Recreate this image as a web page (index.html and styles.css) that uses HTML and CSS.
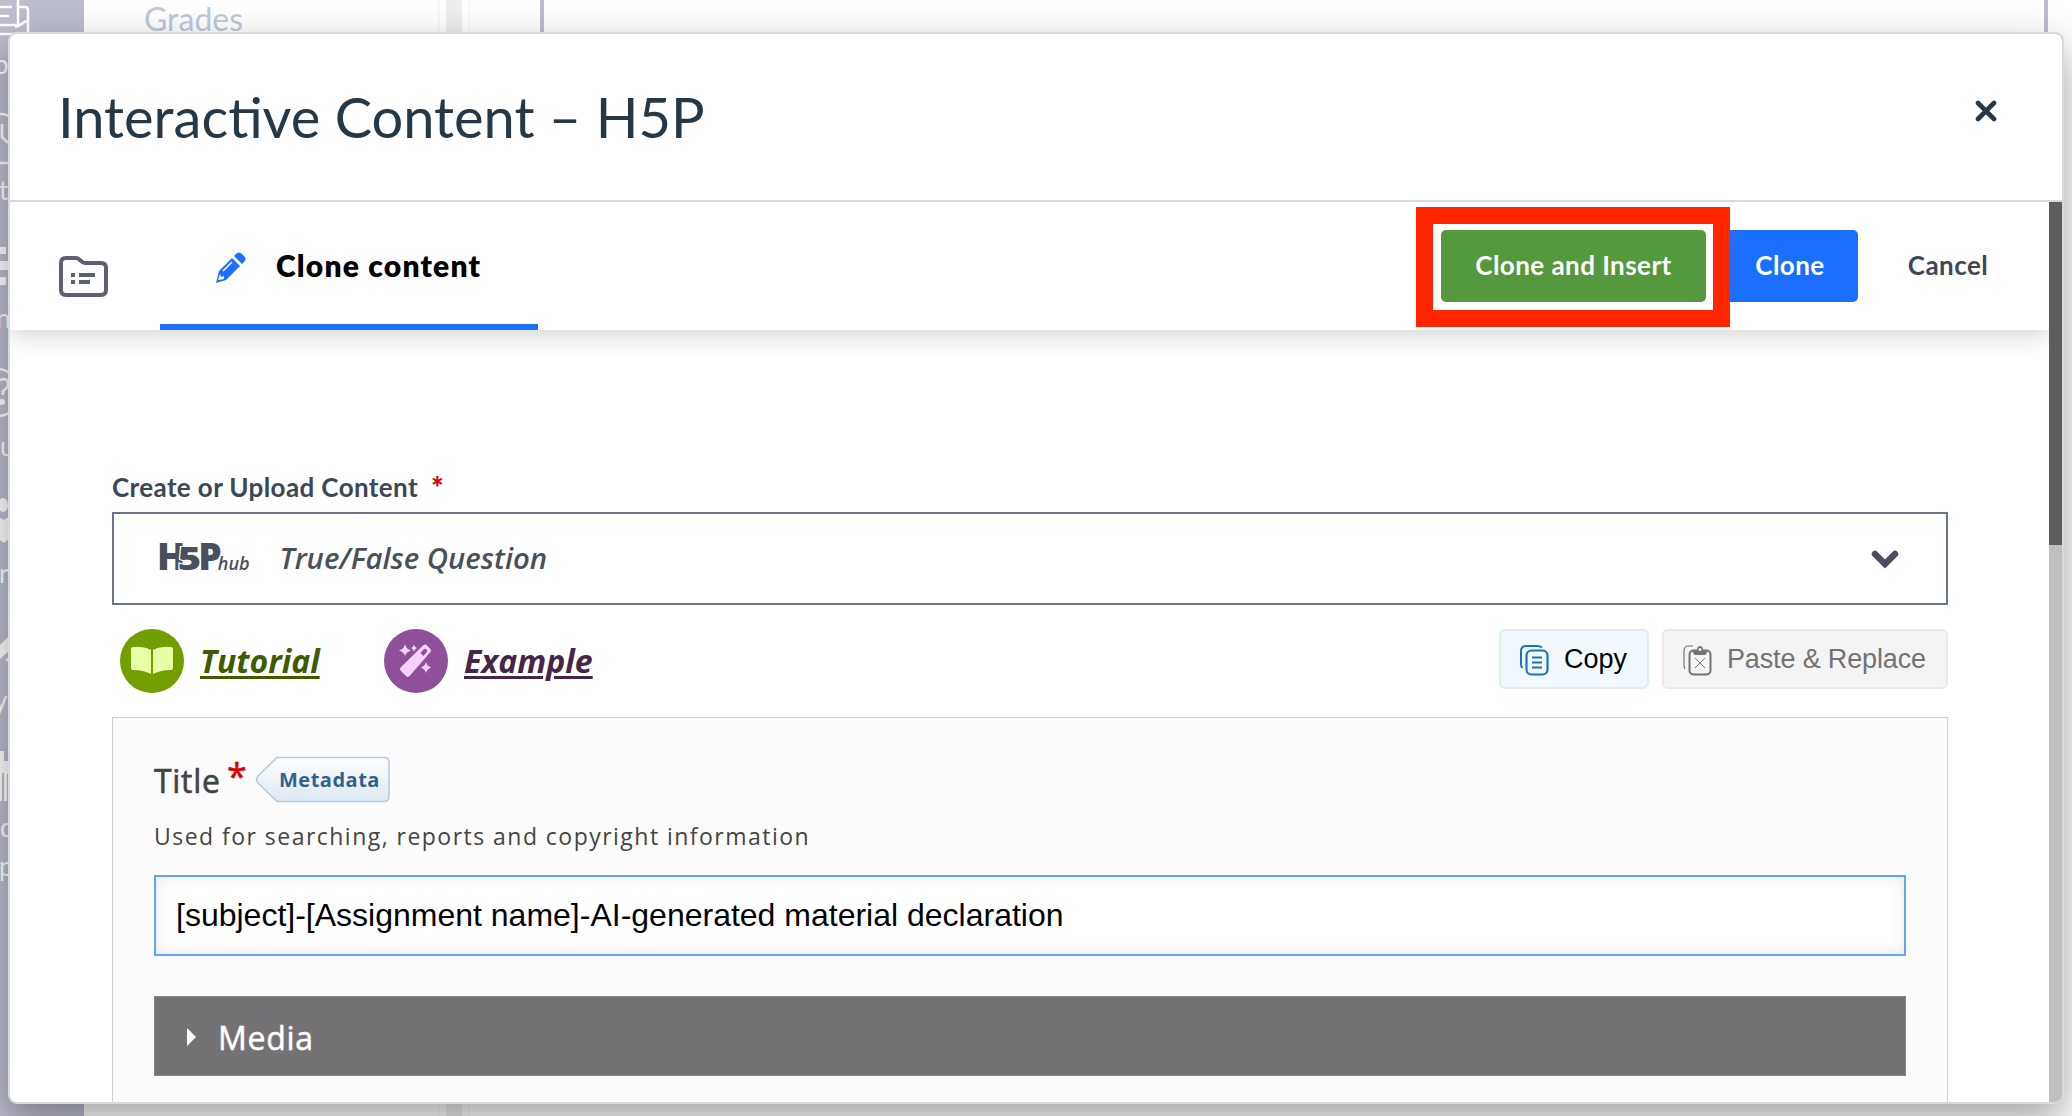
FILE: index.html
```html
<!DOCTYPE html>
<html lang="en">
<head>
  <meta charset="UTF-8" />
  <meta name="viewport" content="width=device-width, initial-scale=1.0"/>
  <title>Interactive Content – H5P</title>
  <link rel="stylesheet" href="styles.css">
</head>
<body>

  <div class="page">
    <nav class="global-nav">
      <svg width="84" height="1116" viewBox="0 0 84 1116">
        <g fill="none" stroke="#fff" stroke-width="2.6">
          <path d="M0 7H12M0 16H9M18 0V25H0M18 7H25Q28 7 28 10V32M0 34H40M15 27C21 27 22 21 28 21"/>
          <path d="M0 114H2Q6 114 10 117M0 163H10M2 124V137L8 143"/>
          <path d="M0 369Q8 370 12 377M0 380Q8 377 8 384Q8 388 3 391V395M0 416Q8 415 12 410"/>
        </g>
        <g fill="#fff">
          <path d="M0 247H6V254H0zM0 261H10V270H0zM0 277H6V285H0z"/>
          <circle cx="2" cy="402" r="3"/>
          <ellipse cx="3" cy="505" rx="5" ry="7"/>
          <path d="M0 518L4 520L10 516V538L4 543L0 540z"/>
          <path d="M0 645L10 635V650L0 659zM5 660L10 656V663z"/>
          <path d="M0 751H4V761H10V774H7V801H4V773H2V801H0z"/>
        </g>
        <g class="nav-text">
          <text x="-6" y="74">p</text>
          <text x="-1" y="200">t</text>
          <text x="-4" y="328">n</text>
          <text x="0" y="456">u</text>
          <text x="-1" y="583">r</text>
          <text x="-6" y="710">y</text>
          <text x="0" y="837">d</text>
          <text x="-1" y="876">p</text>
        </g>
      </svg>
    </nav>
    <aside class="course-menu">Grades</aside>
    <div class="divider"></div>
    <div class="page-main"><div class="editor-frame"></div></div>
  </div>

  <div class="modal">
    <header class="modal-header">
      <h1>Interactive Content – H5P</h1>
      <svg class="close" width="22" height="22" viewBox="0 0 22 22">
        <path d="M3 3L19 19M19 3L3 19" fill="none" stroke="#263845" stroke-width="4.6" stroke-linecap="round"/>
      </svg>
    </header>

    <div class="modal-body">
      <div class="frame">
        <div class="toolbar">
          <svg class="folder" width="50" height="42" viewBox="0 0 50 42">
            <path d="M7 2H17C21 2 22 7 26 7H42Q47 7 47 12V34Q47 39 42 39H7Q2 39 2 34V7Q2 2 7 2Z" fill="none" stroke="#5d606e" stroke-width="4"/>
            <path d="M12 19H16M20 19H36M12 26H16M20 26H31" stroke="#5d606e" stroke-width="4"/>
          </svg>
          <div class="tab">
            <svg width="32" height="32" viewBox="0 0 32 32">
              <path d="M21 2Q24-1 27 2L29 4Q32 7 29 10L27 12L19 4Z" fill="#1a6fff"/>
              <path d="M17 6L25 14L11 28L1 31L4 19Z" fill="#1a6fff"/>
              <path d="M8 19L17 10" stroke="#fff" stroke-width="1.6"/>
              <path d="M5 22L3 28L9 27L9 24L6 25Z" fill="#fff"/>
            </svg>
            <span>Clone content</span>
          </div>
          <div class="actions">
            <div class="insert-wrap">
              <button class="btn btn-insert">Clone and Insert</button>
              <div class="highlight"></div>
            </div>
            <button class="btn btn-clone">Clone</button>
            <button class="btn btn-cancel">Cancel</button>
          </div>
        </div>

        <div class="content">
          <label class="field-label">Create or Upload Content <span class="required">*</span></label>
          <div class="hub">
            <span class="hub-logo">H<span class="five">5</span>P</span><span class="hub-sub">hub</span>
            <span class="hub-title">True/False Question</span>
            <svg class="chevron" width="28" height="20" viewBox="0 0 28 20">
              <path d="M4 5L14 15L24 5" fill="none" stroke="#494f5c" stroke-width="6.5" stroke-linecap="round"/>
            </svg>
          </div>

          <div class="links">
            <svg width="64" height="64" viewBox="0 0 64 64">
              <circle cx="32" cy="32" r="32" fill="#739e00"/>
              <path d="M31 21Q23 17 13 18Q11 18 11 20V39Q11 41 13 41Q23 41 31 45ZM33 21Q41 17 51 18Q53 18 53 20V39Q53 41 51 41Q41 41 33 45Z" fill="#e7ffa6"/>
            </svg>
            <a class="tutorial">Tutorial</a>
            <svg width="64" height="64" viewBox="0 0 64 64">
              <circle cx="32" cy="32" r="32" fill="#8f4f9b"/>
              <path d="M39 16.500Q41 14.500 43 16.500L46 19.500Q48 21.500 46 23.500L26 46.500Q24 49 22 47L17 42Q15 40 17 38Z" fill="#f6d3ff"/>
              <path d="M39 21Q41 19 42.500 20.500T42 24L39.500 27L36.500 24Z" fill="#8f4f9b"/>
              <path d="M21 15Q22 20 27 21.500Q22 23 21 27Q20 23 15 21.500Q20 20 21 15ZM30 15.500Q30.500 18 33 19Q30.500 20 30 22.500Q29.500 20 27 19Q29.500 18 30 15.500ZM42 33Q43 37 47 38.500Q43 40 42 44Q41 40 37 38.500Q41 37 42 33Z" fill="#f6d3ff"/>
            </svg>
            <a class="example">Example</a>

            <button class="clip-btn copy">
              <svg width="32" height="32" viewBox="0 0 32 32" fill="none" stroke="#1a73b8">
                <rect x="7.500" y="6.500" width="21" height="24" rx="5" stroke-width="2.200"/>
                <path d="M3.500 24Q2 23 2 20V7Q2 2 7 2H18Q21 2 23 3.500" stroke-width="2"/>
                <path d="M13 13.500H23M13 18.500H23M13 23.500H23" stroke-width="2"/>
              </svg>
              Copy
            </button>
            <button class="clip-btn paste">
              <svg width="32" height="32" viewBox="0 0 32 32" fill="none" stroke="#737373">
                <rect x="7.500" y="6.500" width="21" height="24" rx="4" stroke-width="2"/>
                <path d="M3 25Q2 23 2 20V7Q2 2 7 2H11" stroke-width="1.200"/>
                <path d="M13 14L23 24M23 14L13 24" stroke-width="1"/>
                <path d="M11 6H15Q15 2 18 2T21 6H25V8Q25 11 22 11H14Q11 11 11 8Z" fill="#737373" stroke="none"/>
                <circle cx="18" cy="5.500" r="1.500" fill="#f4f4f4" stroke="none"/>
              </svg>
              Paste &amp; Replace
            </button>
          </div>

          <div class="form">
            <div class="title-row">
              <span class="title-label">Title</span><span class="star">*</span>
              <div class="metadata">
                <svg width="136" height="47" viewBox="0 0 136 47">
                  <defs>
                    <linearGradient id="tag" x1="0" y1="0" x2="0" y2="1">
                      <stop offset="0" stop-color="#fff"/>
                      <stop offset="1" stop-color="#dce8f0"/>
                    </linearGradient>
                  </defs>
                  <path d="M22 1.500H129Q134 1.500 134 6.500V40.500Q134 45.500 129 45.500H22L3 27Q0 23.500 3 20Z" fill="url(#tag)" stroke="#b5c9dc" stroke-width="1.500"/>
                </svg>
                <span>Metadata</span>
              </div>
            </div>
            <p class="description">Used for searching, reports and copyright information</p>
            <input class="title-input" type="text" value="[subject]-[Assignment name]-AI-generated material declaration">
            <div class="media">
              <svg width="9" height="18" viewBox="0 0 9 18"><path d="M0 0L9 9L0 18Z" fill="#fff"/></svg>
              <span>Media</span>
            </div>
          </div>
        </div>
      </div>
      <div class="scrollbar"><div class="thumb"></div></div>
    </div>
  </div>

</body>
</html>
```

FILE: styles.css
```css
* {
  box-sizing: border-box;
}

body {
  margin: 0;
  height: 1116px;
  overflow: hidden;
  background: #fff;
  font-family: "Open Sans", sans-serif;
  position: relative;
}

button {
  border: none;
  font-family: inherit;
}

svg {
  display: block;
  flex: none;
}

/* page behind the dialog */
.page {
  display: flex;
  height: 1116px;
}

.global-nav {
  width: 84px;
  background: #bcbdce;
}

.nav-text {
  font: 26px Lato, sans-serif;
  fill: #fff;
}

.course-menu {
  width: 356px;
  padding: 0 0 0 60px;
  font: 32px/37px Lato, sans-serif;
  color: #bfc9da;
  border-right: 2px solid #f7f7f7;
}

.divider {
  width: 16px;
  padding: 0 6px;
  background: #ededed content-box;
  border-right: 2px solid #f9f9f9;
  box-sizing: content-box;
}

.page-main {
  flex: 1;
  padding: 0 24px 0 70px;
}

.editor-frame {
  height: 900px;
  border: solid #bcbdce;
  border-width: 0 4px;
}

/* dialog */
.modal {
  position: absolute;
  left: 8px;
  top: 32px;
  width: 2056px;
  height: 1072px;
  display: flex;
  flex-direction: column;
  background: #fff;
  border: 2px solid #d8d8df;
  border-radius: 9px;
  box-shadow: 0 16px 40px rgba(0, 0, 0, 0.36);
  overflow: hidden;
}

.modal-header {
  height: 168px;
  flex: none;
  display: flex;
  align-items: center;
  justify-content: space-between;
  padding: 0 65px 0 48px;
  border-bottom: 2px solid #d8d8df;
}

.modal-header h1 {
  margin: 0;
  font: 400 56px/80px Lato, sans-serif;
  color: #263845;
}

.close {
  margin-bottom: 13px;
}

.modal-body {
  flex: 1;
  display: flex;
  min-height: 0;
}

.frame {
  flex: 1;
  overflow: hidden;
}

.scrollbar {
  width: 13px;
  background: #bfbfbf;
}

.thumb {
  height: 343px;
  background: #5e5e5e;
}

/* toolbar */
.toolbar {
  height: 128px;
  display: flex;
  padding-left: 49px;
  box-shadow: 0 8px 20px rgba(0, 0, 0, 0.15);
  font-family: Lato, sans-serif;
}

.folder {
  margin-top: 54px;
}

.tab {
  width: 378px;
  margin-left: 51px;
  padding: 5px 0 0 55px;
  display: flex;
  align-items: center;
  gap: 29px;
  border-bottom: 6px solid #1a6fff;
  font-size: 30px;
  font-weight: 800;
  letter-spacing: 1.2px;
  color: #000;
}

.tab span {
  margin-bottom: 1px;
}

.tab svg {
  margin-top: 4px;
}

.actions {
  margin: 28px 27px 0 auto;
  display: flex;
  gap: 16px;
  height: 72px;
}

.insert-wrap {
  position: relative;
}

.btn {
  height: 72px;
  padding: 0 0 2px;
  border-radius: 5px;
  font-size: 26px;
  font-weight: 700;
  letter-spacing: 0.45px;
  color: #fff;
}

.btn-insert {
  width: 265px;
  background: #54993d;
}

.btn-clone {
  width: 136px;
  background: #1a6fff;
}

.btn-cancel {
  width: 148px;
  background: none;
  color: #3f4757;
}

.highlight {
  position: absolute;
  left: -25px;
  top: -23px;
  width: 314px;
  height: 120px;
  border: 17px solid #ff2600;
}

/* editor */
.content {
  width: 1836px;
  margin: 141px 0 0 102px;
}

.field-label {
  display: flex;
  height: 41px;
  gap: 13px;
  font: 700 26px/32px Lato, sans-serif;
  letter-spacing: 0.38px;
  color: #3b4759;
}

.required {
  font-size: 30px;
  font-weight: 900;
  color: #d90000;
}

.hub {
  height: 93px;
  display: flex;
  align-items: center;
  padding: 0 47px 2px 43px;
  border: 2px solid #6a7588;
  color: #494f5c;
}

.hub-logo {
  display: flex;
  align-items: baseline;
  margin-bottom: 5px;
  font-size: 37px;
  font-weight: 800;
}

.five {
  position: relative;
  width: 19px;
  margin: 0 -1px 0 -5px;
  font-size: 32px;
  transform: scaleX(1.25);
  -webkit-text-stroke: 2px #fff;
  paint-order: stroke fill;
}

.hub-sub {
  margin: 11px 0 0 -4px;
  font-size: 18px;
  font-style: italic;
  font-weight: 600;
}

.hub-title {
  margin-left: 30px;
  font-size: 29.3px;
  font-style: italic;
  font-weight: 600;
}

.chevron {
  margin: 2px 0 0 auto;
}

.links {
  height: 112px;
  display: flex;
  align-items: center;
  padding: 0 0 0 8px;
}

.links a {
  margin: 0 0 2px 16px;
  font-size: 32px;
  font-style: italic;
  font-weight: 700;
  text-decoration: underline;
  text-decoration-thickness: 3px;
  text-underline-offset: 3px;
}

.tutorial {
  width: 184px;
  color: #405a00;
}

.example {
  color: #452648;
}

.clip-btn {
  height: 60px;
  display: flex;
  align-items: center;
  margin-bottom: 4px;
  padding: 1px 0 0 18px;
  border: 2px solid #eaeaea;
  border-radius: 6px;
  font: 27px "Liberation Sans", Arial, sans-serif;
  gap: 13px;
}

.copy {
  width: 150px;
  margin-left: auto;
  background: #f1f9ff;
  border-color: #dfefec;
  color: #000;
}

.paste {
  width: 286px;
  margin-left: 13px;
  background: #f4f4f4;
  color: #737373;
  letter-spacing: -0.15px;
}

.form {
  height: 500px;
  padding: 38px 41px 0;
  background: #fcfcfc;
  border: 1px solid #cfcfcf;
}

.title-row {
  display: flex;
  height: 46px;
}

.title-label {
  width: 67px;
  font-size: 32px;
  line-height: 49px;
  letter-spacing: 0.7px;
  -webkit-text-stroke: 0.6px #444;
  color: #444;
}

.star {
  width: 34px;
  padding-left: 6px;
  font-size: 36px;
  line-height: 39px;
  color: #d90000;
  -webkit-text-stroke: 0.5px #d90000;
}

.metadata {
  position: relative;
}

.metadata span {
  position: absolute;
  left: 24px;
  top: 10px;
  font-size: 20px;
  line-height: 27px;
  font-weight: 700;
  letter-spacing: 0.5px;
  color: #34608f;
}

.description {
  margin: 18px 0 22px;
  font-size: 23px;
  line-height: 33px;
  letter-spacing: 1.47px;
  color: #444;
}

.title-input {
  display: block;
  width: 100%;
  height: 81px;
  padding: 0 20px;
  border: 2px solid #61a5f8;
  box-shadow: inset 0 0 14px rgba(0, 0, 0, 0.1);
  font: 32px "Liberation Sans", Arial, sans-serif;
  color: #000;
  outline: none;
}

.media {
  height: 80px;
  margin-top: 40px;
  padding: 2px 0 0 32px;
  display: flex;
  align-items: center;
  gap: 22px;
  background: #747275;
  border: 1px solid #858585;
  font-size: 32px;
  letter-spacing: 0.7px;
  -webkit-text-stroke: 0.5px #fff;
  color: #fff;
}
```
